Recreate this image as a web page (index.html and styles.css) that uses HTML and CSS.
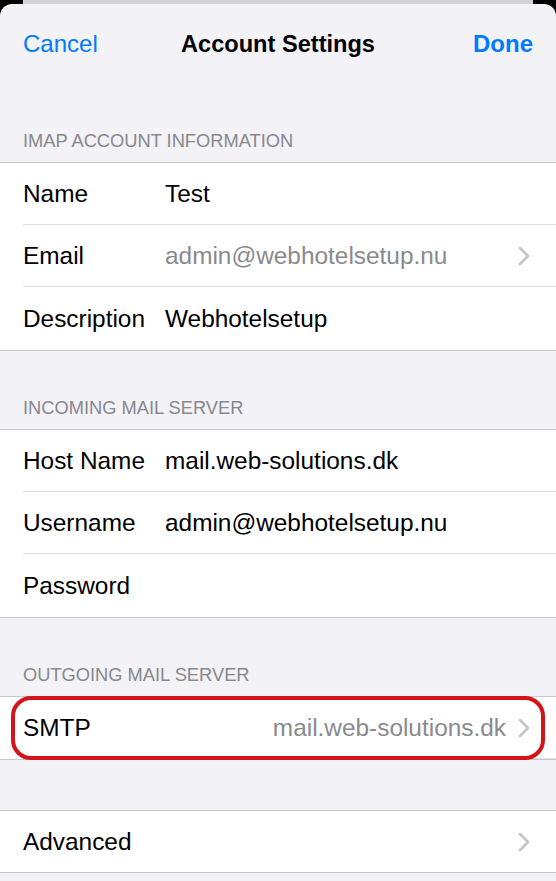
FILE: index.html
```html
<!DOCTYPE html>
<html lang="en">

<head>
    <meta charset="UTF-8">
    <meta name="viewport" content="width=device-width, initial-scale=1.0">
    <title>Account Settings</title>
    <link rel="stylesheet" href="styles.css">
</head>

<body>
    <div class="backdrop"></div>
    <div class="sheet">
        <div class="nav">
            <span class="nav-btn">Cancel</span>
            <span class="nav-title">Account Settings</span>
            <span class="nav-btn done">Done</span>
        </div>

        <div class="section-head">IMAP Account Information</div>
        <div class="group">
            <div class="row">
                <span class="label">Name</span>
                <span class="value">Test</span>
            </div>
            <div class="row">
                <span class="label">Email</span>
                <span class="value muted">admin@webhotelsetup.nu</span>
                <svg class="chev" width="12" height="20" viewBox="0 0 12 20"><polyline points="2,2 10,10 2,18" /></svg>
            </div>
            <div class="row">
                <span class="label">Description</span>
                <span class="value">Webhotelsetup</span>
            </div>
        </div>

        <div class="section-head">Incoming Mail Server</div>
        <div class="group">
            <div class="row">
                <span class="label">Host Name</span>
                <span class="value">mail.web-solutions.dk</span>
            </div>
            <div class="row">
                <span class="label">Username</span>
                <span class="value">admin@webhotelsetup.nu</span>
            </div>
            <div class="row">
                <span class="label">Password</span>
                <span class="value"></span>
            </div>
        </div>

        <div class="section-head">Outgoing Mail Server</div>
        <div class="group highlight">
            <div class="row">
                <span class="label">SMTP</span>
                <span class="value muted right">mail.web-solutions.dk</span>
                <svg class="chev" width="12" height="20" viewBox="0 0 12 20"><polyline points="2,2 10,10 2,18" /></svg>
            </div>
            <div class="ring"></div>
        </div>

        <div class="spacer"></div>
        <div class="group single">
            <div class="row">
                <span class="label">Advanced</span>
                <span class="value"></span>
                <svg class="chev" width="12" height="20" viewBox="0 0 12 20"><polyline points="2,2 10,10 2,18" /></svg>
            </div>
        </div>
    </div>
</body>

</html>
```

FILE: styles.css
```css
body {
    margin: 0;
    background: #000;
    font-family: "Liberation Sans", Arial, sans-serif;
    overflow: hidden;
}

.backdrop {
    height: 4px;
    margin: 0 23px;
    background: #d2d2d7;
}

.sheet {
    background: #f2f2f7;
    border-radius: 12px 12px 0 0;
    height: 877px;
}

.nav {
    height: 80px;
    display: grid;
    grid-template-columns: 1fr auto 1fr;
    align-items: center;
    padding: 0 23px;
}

.nav-btn {
    color: #007aff;
    font-size: 24px;
}

.nav-btn.done {
    font-weight: bold;
    text-align: right;
}

.nav-title {
    font-size: 23.6px;
    font-weight: bold;
    color: #000;
}

.section-head {
    height: 78px;
    box-sizing: border-box;
    padding: 45px 23px 9px;
    line-height: 24px;
    font-size: 18.3px;
    color: #88888d;
    text-transform: uppercase;
}

.group {
    background: #fff;
    border-top: 1px solid #c8c8cc;
    border-bottom: 1px solid #c8c8cc;
}

.row {
    height: 62px;
    margin-left: 23px;
    padding-right: 26px;
    display: flex;
    align-items: center;
    font-size: 24.4px;
    color: #000;
    border-bottom: 1px solid #e0e0e3;
    box-sizing: border-box;
}

.row:last-child {
    border-bottom: none;
    height: 63px;
}

.highlight .row {
    height: 62px;
}

.single .row {
    height: 61px;
}

.label {
    width: 142px;
    flex-shrink: 0;
}

.value {
    flex: 1;
    white-space: nowrap;
}

.muted {
    color: #8a8a8e;
}

.right {
    text-align: right;
    margin-right: 12px;
}

.chev {
    flex-shrink: 0;
}

.chev polyline {
    fill: none;
    stroke: #c4c4c7;
    stroke-width: 2.5;
    stroke-linecap: round;
    stroke-linejoin: round;
}

.highlight {
    position: relative;
}

.ring {
    position: absolute;
    left: 11px;
    right: 11px;
    top: -1px;
    bottom: -1px;
    border: 4px solid #d3141b;
    border-radius: 20px;
}

.spacer {
    height: 50px;
}
```
